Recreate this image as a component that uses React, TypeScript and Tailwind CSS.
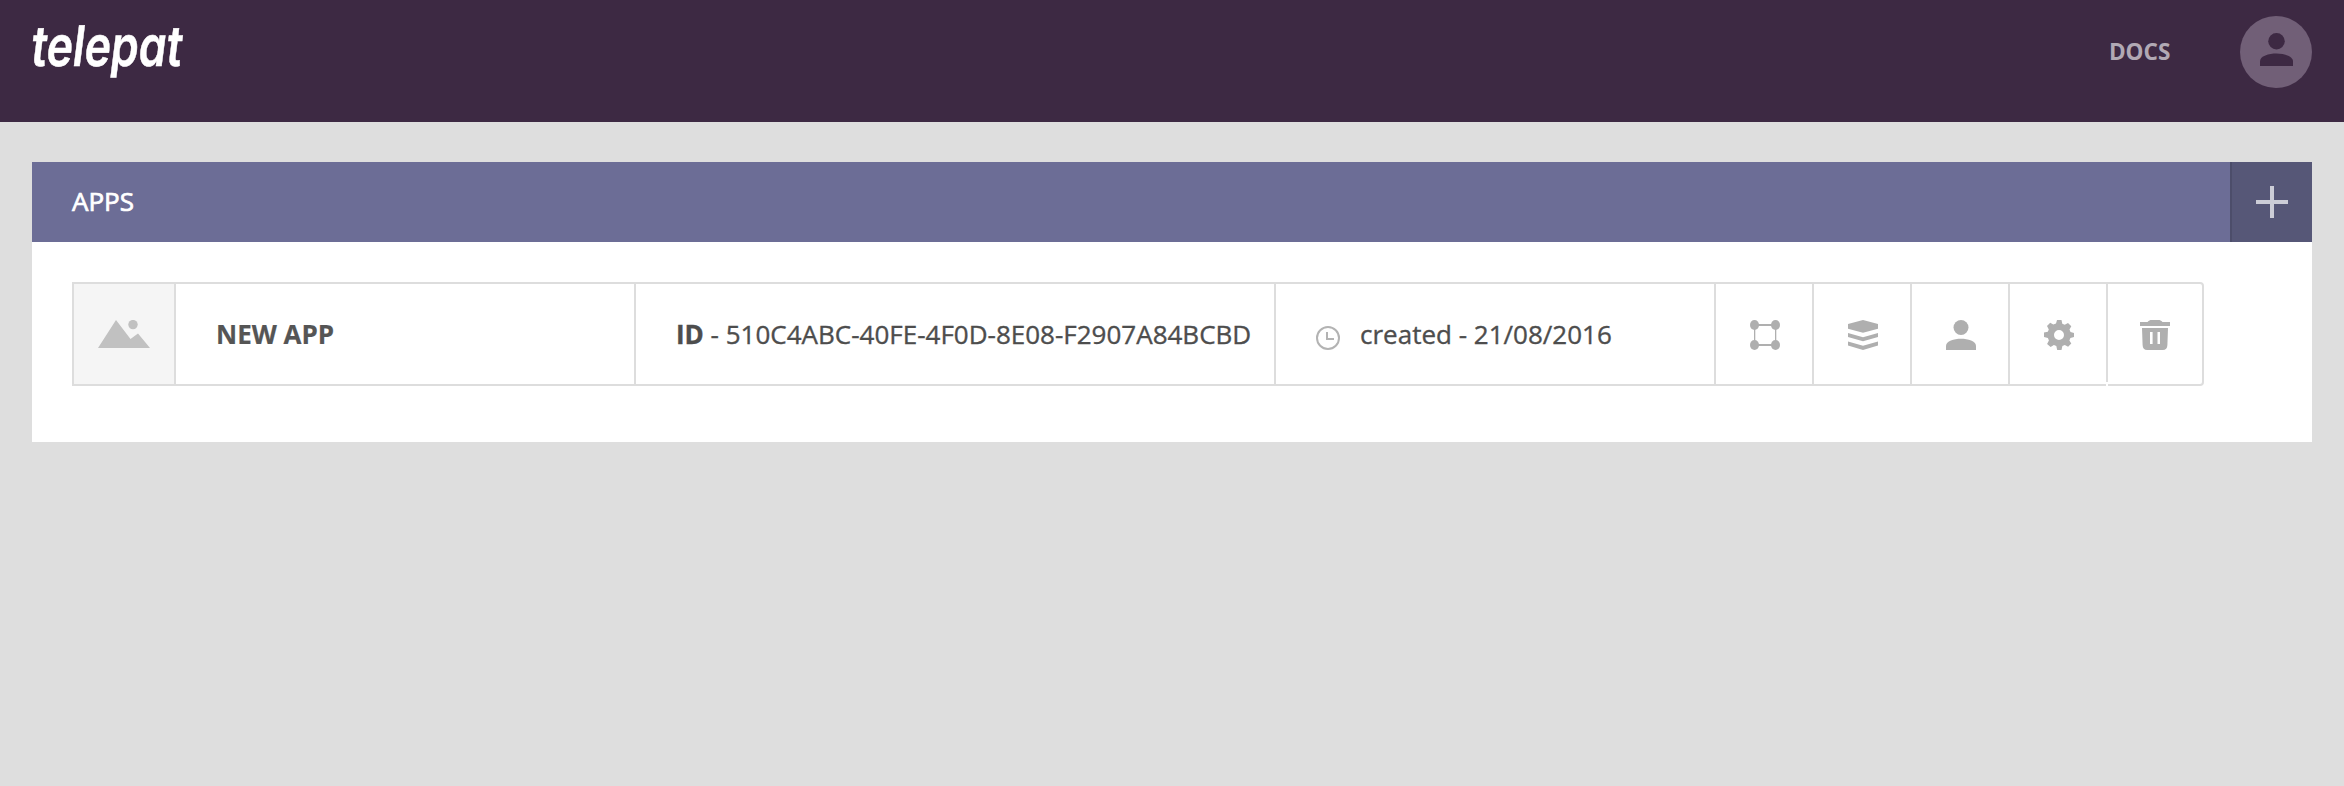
import type { ReactNode } from "react";

function PersonIcon({ className }: { className?: string }) {
  return (
    <svg viewBox="0 0 30 30" className={className} fill="currentColor">
      <circle cx="15" cy="7.500" r="7.500" />
      <path d="M0 30v-4.200C0 21 8 18.700 15 18.700S30 21 30 25.800V30z" />
    </svg>
  );
}

function PlusIcon() {
  return (
    <svg viewBox="0 0 32 32" className="h-8 w-8" fill="currentColor">
      <path d="M14 0h4v14h14v4H18v14h-4V18H0v-4h14z" />
    </svg>
  );
}

function PictureIcon() {
  return (
    <svg viewBox="0 0 52 28" className="h-7 w-[52px]" fill="currentColor">
      <path d="M0 28 18 0l14.500 19L40 13.500 52 28z" />
      <circle cx="35" cy="4.600" r="4.700" />
    </svg>
  );
}

function ClockIcon() {
  return (
    <svg viewBox="0 0 24 24" className="h-6 w-6" fill="none" stroke="currentColor" strokeWidth="2">
      <circle cx="12" cy="12" r="11" />
      <path d="M11 6v7h7" />
    </svg>
  );
}

function SchemaIcon() {
  return (
    <svg viewBox="0 0 30 30" className="h-[30px] w-[30px]" fill="currentColor">
      <path d="M8 4h14v2H8zM8 24h14v2H8zM4 8h1.300v14H4zM25 8h1.300v14H25z" />
      <ellipse cx="4.500" cy="5" rx="4.500" ry="5" />
      <ellipse cx="25.500" cy="5" rx="4.500" ry="5" />
      <ellipse cx="4.500" cy="25" rx="4.500" ry="5" />
      <ellipse cx="25.500" cy="25" rx="4.500" ry="5" />
    </svg>
  );
}

function LayersIcon() {
  return (
    <svg viewBox="0 0 30 30" className="h-[30px] w-[30px]" fill="currentColor">
      <path d="M0 4 15 0l15 4v4.800L15 12.800 0 8.800z" />
      <path d="M0 13l15 4.200L30 13v4l-15 4.300L0 17z" />
      <path d="M0 21.500l15 4.200 15-4.200v4L15 30 0 25.500z" />
    </svg>
  );
}

function GearIcon() {
  return (
    <svg viewBox="0 0 30 30" className="h-[30px] w-[30px]" fill="currentColor">
      <path
        fillRule="evenodd"
        d="M13 0h4.500l.8 3.700 2.400 1L24 3l3.300 3.300-1.800 3.200 1 2.500 3.500 1v4l-3.600.9-1 2.500 1.900 3.200-3.200 3.200-3.300-1.800-2.400 1-.9 4h-4.300l-.9-3.900-2.400-1-3.300 1.800-3.500-3 1.800-3.400-1-2.400L0 17v-4.400l3.800-.8 1-2.400L3 6l3.200-3.200L9.300 4.500l2.700-1zM15 10a5 5 0 1 0 0 10 5 5 0 0 0 0-10z"
      />
    </svg>
  );
}

function TrashIcon() {
  return (
    <svg viewBox="0 0 30 30" className="h-[30px] w-[30px]" fill="currentColor">
      <path d="M0 2h7.500C9 .6 10 0 11.500 0h7C20 0 21 .6 22.500 2H30v4H0z" />
      <path
        fillRule="evenodd"
        d="M2 8h26l-.6 17c-.1 3.500-1.700 5-4.600 5H7.200c-2.900 0-4.500-1.500-4.600-5zM10 12v12h2.600V12zM17.500 12v12H20V12z"
      />
    </svg>
  );
}

function ActionCell({ children }: { children: ReactNode }) {
  return (
    <button className="flex w-[98px] items-center justify-center border-r-2 border-[#dddddd] pt-0.5 pl-0.5 text-[#afafaf]">
      {children}
    </button>
  );
}

export default function App() {
  return (
    <div className="min-h-screen bg-[#dedede] font-['Open_Sans',sans-serif] text-[#4d4d4d]">
      <header className="flex h-[122px] items-start justify-between bg-[#3d2943] px-8">
        <div className="mt-4 h-[60px] w-[152px]">
          <span className="inline-block origin-left -skew-x-[9deg] scale-x-[0.795] whitespace-nowrap font-['Inter',sans-serif] text-[56px] leading-[60px] font-semibold text-white [-webkit-text-stroke:0.5px_white] [font-feature-settings:'cv11']">
            telepat
          </span>
        </div>
        <div className="mt-4 flex items-start gap-[70px]">
          <a className="origin-right scale-x-[0.94] text-[24px] leading-[70px] font-bold text-[#b1a9b4]">
            DOCS
          </a>
          <div className="flex h-[72px] w-[72px] justify-center rounded-full bg-[#715f77] pt-[17px] text-[#3d2943]">
            <PersonIcon className="h-[33px] w-[33px]" />
          </div>
        </div>
      </header>

      <main className="px-8 pt-10">
        <section className="h-[280px] bg-white">
          <div className="flex h-20 items-center justify-between bg-[#6c6d96] pl-10">
            <h1 className="pb-0.5 text-[26px] text-white [-webkit-text-stroke:0.7px_white]">APPS</h1>
            <button className="flex h-20 w-[82px] items-center justify-center border-l-2 border-[#4c4d6a] bg-[#565777] text-[#cccdd7]">
              <PlusIcon />
            </button>
          </div>
          <div className="px-10 pt-10">
            <div className="flex h-[104px] w-[2132px] rounded-r-[4px] border-2 border-[#dddddd] text-[26px] whitespace-nowrap">
              <div className="flex w-[102px] items-center justify-center border-r-2 border-[#dddddd] bg-[#f5f5f5] text-[#c1c1c1]">
                <PictureIcon />
              </div>
              <div className="flex w-[460px] items-center border-r-2 border-[#dddddd] pl-10 font-bold text-[#555555] [-webkit-text-stroke:0.2px_#555555]">
                NEW APP
              </div>
              <div className="flex w-[640px] items-center border-r-2 border-[#dddddd] pl-10 [-webkit-text-stroke:0.35px_#4d4d4d]">
                <p>
                  <strong>ID</strong> - 510C4ABC-40FE-4F0D-8E08-F2907A84BCBD
                </p>
              </div>
              <div className="flex w-[440px] items-center border-r-2 border-[#dddddd] pl-10 [-webkit-text-stroke:0.35px_#4d4d4d]">
                <span className="mt-2 mr-5 text-[#b3b3b3]">
                  <ClockIcon />
                </span>
                created - 21/08/2016
              </div>
              <ActionCell>
                <SchemaIcon />
              </ActionCell>
              <ActionCell>
                <LayersIcon />
              </ActionCell>
              <ActionCell>
                <PersonIcon className="h-[30px] w-[30px]" />
              </ActionCell>
              <ActionCell>
                <GearIcon />
              </ActionCell>
              <button className="relative flex w-[94px] items-center justify-center pt-0.5 text-[#afafaf]">
                <span className="absolute -bottom-0.5 -left-0.5 h-1 w-0.5 bg-white" />
                <TrashIcon />
              </button>
            </div>
          </div>
        </section>
      </main>
    </div>
  );
}
